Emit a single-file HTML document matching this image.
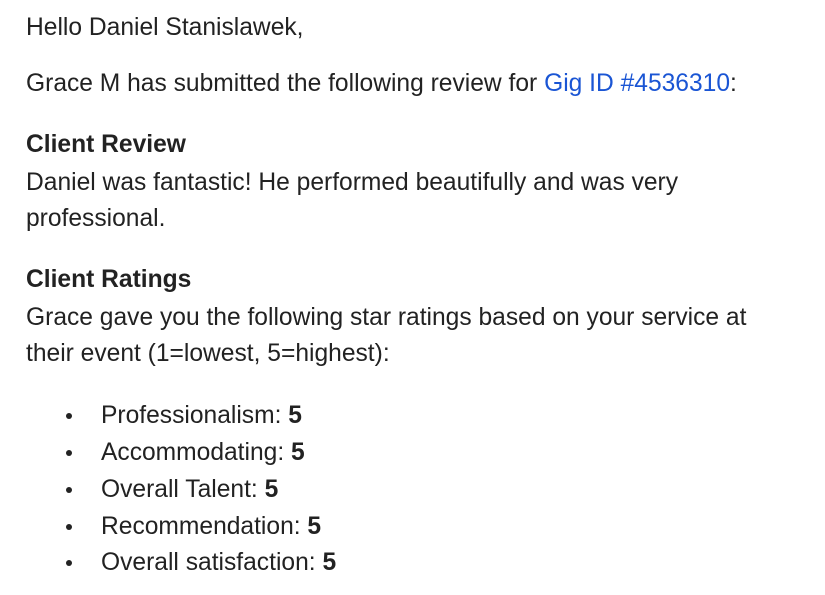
<!DOCTYPE html>
<html><head><style>
body{margin:0;width:825px;height:595px;background:#fff;font-family:"Liberation Sans",Arial,sans-serif;font-size:24.6px;color:#222;overflow:hidden}
.l{position:absolute;left:26px;line-height:36px;white-space:nowrap}
.b{font-weight:bold}
a{color:#1a55d4;text-decoration:none}
.li{position:absolute;left:101px;line-height:36px;white-space:nowrap}
.li:before{content:"";position:absolute;left:-35px;top:15px;width:6px;height:6px;border-radius:50%;background:#222}
</style></head><body>
<div class="l" style="top:10px">Hello Daniel Stanislawek,</div>
<div class="l" style="top:66px">Grace M has submitted the following review for <a>Gig ID #4536310</a>:</div>
<div class="l b" style="top:127px">Client Review</div>
<div class="l" style="top:165px">Daniel was fantastic! He performed beautifully and was very</div>
<div class="l" style="top:201px">professional.</div>
<div class="l b" style="top:262px">Client Ratings</div>
<div class="l" style="top:300px">Grace gave you the following star ratings based on your service at</div>
<div class="l" style="top:336px">their event (1=lowest, 5=highest):</div>
<div class="li" style="top:398px">Professionalism: <b>5</b></div>
<div class="li" style="top:435px">Accommodating: <b>5</b></div>
<div class="li" style="top:472px">Overall Talent: <b>5</b></div>
<div class="li" style="top:509px">Recommendation: <b>5</b></div>
<div class="li" style="top:545px">Overall satisfaction: <b>5</b></div>
</body></html>
